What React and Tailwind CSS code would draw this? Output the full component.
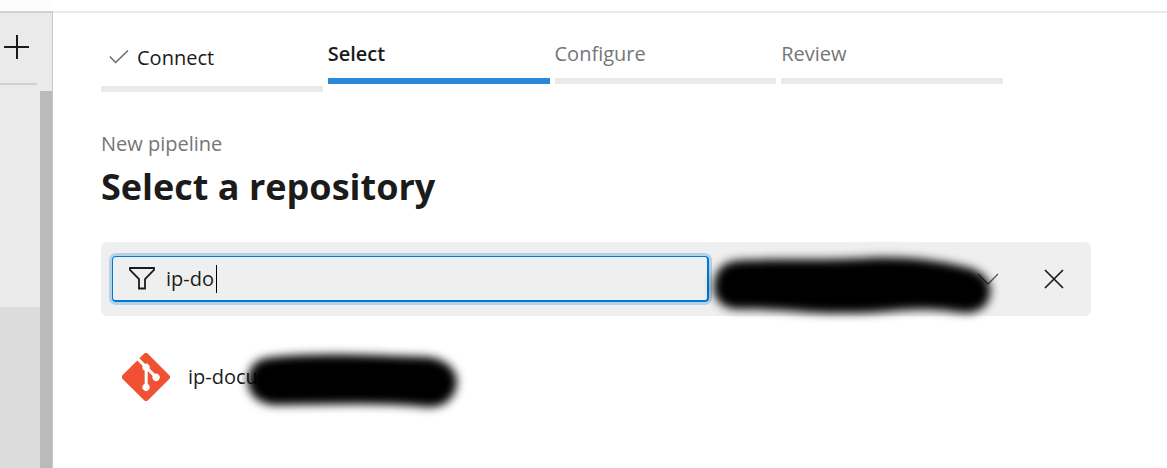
import React, { useState } from "react";

function Step({ label, state }) {
  if (state === "done") {
    return (
      <li className="border-b-6 border-[#eaeaea] pt-1 pb-[13px] pl-2">
        <a href="#connect" className="flex h-[30px] items-center gap-2 text-[#1b1b1b]">
          <svg className="h-5 w-5 shrink-0" viewBox="0 0 20 20" fill="none" stroke="#666" strokeWidth="1.4" aria-hidden="true">
            <path d="M0.8 8.6 L6.6 14.4 L19 2.4" />
          </svg>
          {label}
        </a>
      </li>
    );
  }
  if (state === "current") {
    return (
      <li aria-current="step" className="border-b-6 border-[#2b88d8] pb-[9px] font-semibold text-[#1b1b1b]">
        <span className="block h-[30px] leading-[30px]">{label}</span>
      </li>
    );
  }
  return (
    <li className="border-b-6 border-[#eaeaea] pb-[9px] text-[#767676]">
      <span className="block h-[30px] leading-[30px]">{label}</span>
    </li>
  );
}

function GitLogo() {
  return (
    <svg className="h-12 w-12 shrink-0" viewBox="0 0 92 92" aria-hidden="true">
      <path
        fill="#f05133"
        d="M90.156 41.965 50.036 1.848a5.918 5.918 0 0 0-8.372 0l-8.328 8.332 10.566 10.566a7.03 7.03 0 0 1 7.23 1.684 7.034 7.034 0 0 1 1.669 7.277l10.187 10.184a7.028 7.028 0 0 1 7.278 1.672 7.04 7.04 0 0 1 0 9.957 7.05 7.05 0 0 1-9.965 0 7.044 7.044 0 0 1-1.528-7.66l-9.5-9.497V59.36a7.04 7.04 0 0 1 1.86 11.29 7.04 7.04 0 0 1-9.957 0 7.04 7.04 0 0 1 0-9.958 7.06 7.06 0 0 1 2.304-1.539V33.926a7.049 7.049 0 0 1-3.82-9.234L29.242 14.272 1.73 41.777a5.925 5.925 0 0 0 0 8.371L41.852 90.27a5.925 5.925 0 0 0 8.37 0l39.934-39.934a5.925 5.925 0 0 0 0-8.371"
      />
    </svg>
  );
}

export default function App() {
  const [query, setQuery] = useState("ip-do");
  return (
    <div className="flex min-h-screen flex-col bg-white font-['Open_Sans','Noto_Sans',sans-serif] text-[20px] text-[#1b1b1b]">
      <header className="flex h-[13px] shrink-0 border-b-2 border-[#eaeaea]">
        <div className="-mb-[2px] w-[53px] border-b-2 border-[#d0d0d0] bg-[#fdfdfd]" />
      </header>
      <div className="flex grow">
        <nav className="flex w-[53px] shrink-0 flex-col border-r border-[#c8c8c8] bg-[#eaeaea]" aria-label="Project">
          <div className="mr-[15px] flex h-[72px] border-b-2 border-[#cfcfcf]">
            <button type="button" aria-label="Add" className="ml-1 mt-[22px] h-[25px] w-[25px]">
              <svg className="h-[25px] w-[25px]" viewBox="0 0 25 25" stroke="#1b1b1b" strokeWidth="2" aria-hidden="true">
                <path d="M0 12H25M13 0V24" />
              </svg>
            </button>
          </div>
          <div className="flex grow">
            <div className="flex grow flex-col pt-[222px]">
              <div className="grow bg-[#dcdcdc]" />
            </div>
            <div className="flex w-3 flex-col pt-[6px]">
              <div className="grow bg-[#bababa]" />
            </div>
          </div>
        </nav>
        <main className="grow pt-[26px] pr-[76px] pb-8 pl-12">
          <ol className="grid max-w-[902px] grid-cols-4 items-start gap-[5px]">
            <Step label="Connect" state="done" />
            <Step label="Select" state="current" />
            <Step label="Configure" />
            <Step label="Review" />
          </ol>
          <p className="mt-[37px] leading-[30px] text-[#767676]">New pipeline</p>
          <h1 className="text-[36px] leading-[56px] font-bold">Select a repository</h1>
          <div className="relative mt-[27px] flex h-[74px] items-center rounded-md bg-[#efefef] pr-[27px] pl-[11px]">
            <label className="relative flex h-[46px] w-[597px] items-center rounded border border-r-2 border-b-2 border-[#0078d4] pl-4 ring-3 ring-[#b3d3eb]">
              <svg className="h-[25px] w-[26px] shrink-0" viewBox="0 0 26 25" fill="none" stroke="#1b1b1b" strokeWidth="1.8" aria-hidden="true">
                <path d="M1 2H25V4L16 13V22.5H10V13L1 4Z" />
              </svg>
              <input
                aria-label="Filter by keywords"
                value={query}
                onChange={(e) => setQuery(e.target.value)}
                className="ml-[11px] h-full min-w-0 grow bg-transparent caret-transparent outline-none"
              />
              <span className="absolute top-2 left-[103px] h-7 w-px bg-black" aria-hidden="true" />
            </label>
            <button type="button" aria-label="Repository scope" className="ml-auto flex h-8 items-center">
              <svg className="h-3 w-[22px]" viewBox="0 0 22 12" fill="none" stroke="#555" strokeWidth="1.3" aria-hidden="true">
                <path d="M1 1L11 11L21 1" />
              </svg>
            </button>
            <button type="button" aria-label="Clear" className="ml-[45px] flex h-5 w-5 items-center">
              <svg className="h-5 w-5" viewBox="0 0 20 20" stroke="#1b1b1b" strokeWidth="1.7" aria-hidden="true">
                <path d="M1 1L19 19M19 1L1 19" />
              </svg>
            </button>
            <svg className="pointer-events-none absolute top-0 right-[88px] h-[88px] w-[304px]" viewBox="0 0 304 88" aria-hidden="true">
              <path
                className="blur-[5px]"
                d="M36 19C80 16 120 19 170 16C210 14 240 19 262 24C286 28 293 41 291 52C289 67 276 73 258 70C220 63 190 71 150 71C110 72 80 66 40 67C21 67 14 55 15 43C16 28 24 21 36 19Z"
              />
            </svg>
          </div>
          <a href="#repository" className="relative mt-9 flex h-[50px] items-center gap-[18px] pl-[21px]">
            <GitLogo />
            <span>ip-docu</span>
            <svg className="pointer-events-none absolute -top-3 left-[132px] h-20 w-[240px]" viewBox="0 0 240 80" aria-hidden="true">
              <path
                className="blur-[5px]"
                d="M34 18C80 12 130 15 195 17C213 19 224 30 224 42C223 57 212 68 195 67C140 62 90 65 40 65C23 63 14 52 15 40C16 27 22 20 34 18Z"
              />
            </svg>
          </a>
        </main>
      </div>
    </div>
  );
}
